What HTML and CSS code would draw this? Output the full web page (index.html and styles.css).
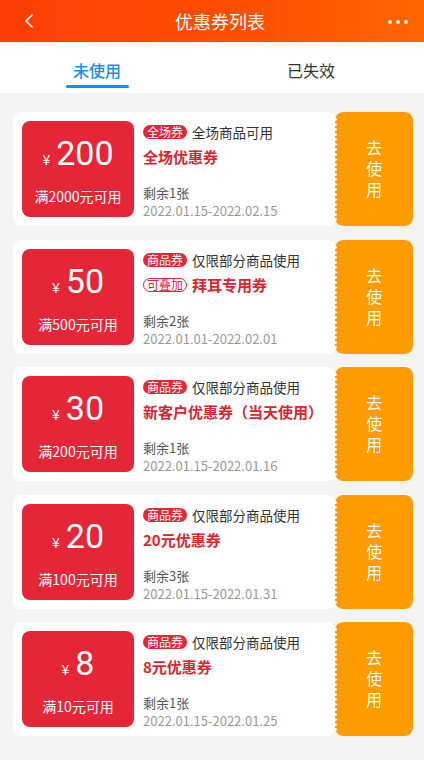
FILE: index.html
```html
<!DOCTYPE html>
<html lang="zh-CN">
<head>
    <meta charset="UTF-8">
    <meta name="viewport" content="width=device-width, initial-scale=1.0">
    <title>优惠券列表</title>
    <link rel="stylesheet" href="styles.css">
</head>
<body>
    <header class="top-bar">
        <svg class="back" width="10" height="14" viewBox="0 0 10 14">
            <polyline points="8,1 2,7 8,13" fill="none" stroke="#fff" stroke-width="1.6" stroke-linecap="round" stroke-linejoin="round"/>
        </svg>
        <div class="title">优惠券列表</div>
        <div class="more"><span></span><span></span><span></span></div>
    </header>

    <!-- Tabs -->
    <div class="tabs">
        <div class="tab active">未使用</div>
        <div class="tab">已失效</div>
    </div>

    <div class="coupon-list">
        <div class="coupon">
            <div class="coupon-body">
                <div class="amount">
                    <div class="value"><span class="yen">¥</span>200</div>
                    <div class="limit">满2000元可用</div>
                </div>
                <div class="info">
                    <div class="scope"><span class="tag">全场券</span>全场商品可用</div>
                    <div class="name">全场优惠券</div>
                    <div class="left">剩余1张</div>
                    <div class="date">2022.01.15-2022.02.15</div>
                </div>
            </div>
            <div class="use-btn"><span>去使用</span></div>
        </div>

        <div class="coupon">
            <div class="coupon-body">
                <div class="amount">
                    <div class="value"><span class="yen">¥</span>50</div>
                    <div class="limit">满500元可用</div>
                </div>
                <div class="info">
                    <div class="scope"><span class="tag">商品券</span>仅限部分商品使用</div>
                    <div class="name"><span class="tag tag-outline">可叠加</span>拜耳专用券</div>
                    <div class="left">剩余2张</div>
                    <div class="date">2022.01.01-2022.02.01</div>
                </div>
            </div>
            <div class="use-btn"><span>去使用</span></div>
        </div>

        <div class="coupon">
            <div class="coupon-body">
                <div class="amount">
                    <div class="value"><span class="yen">¥</span>30</div>
                    <div class="limit">满200元可用</div>
                </div>
                <div class="info">
                    <div class="scope"><span class="tag">商品券</span>仅限部分商品使用</div>
                    <div class="name">新客户优惠券（当天使用）</div>
                    <div class="left">剩余1张</div>
                    <div class="date">2022.01.15-2022.01.16</div>
                </div>
            </div>
            <div class="use-btn"><span>去使用</span></div>
        </div>

        <div class="coupon">
            <div class="coupon-body">
                <div class="amount">
                    <div class="value"><span class="yen">¥</span>20</div>
                    <div class="limit">满100元可用</div>
                </div>
                <div class="info">
                    <div class="scope"><span class="tag">商品券</span>仅限部分商品使用</div>
                    <div class="name">20元优惠券</div>
                    <div class="left">剩余3张</div>
                    <div class="date">2022.01.15-2022.01.31</div>
                </div>
            </div>
            <div class="use-btn"><span>去使用</span></div>
        </div>

        <div class="coupon">
            <div class="coupon-body">
                <div class="amount">
                    <div class="value"><span class="yen">¥</span>8</div>
                    <div class="limit">满10元可用</div>
                </div>
                <div class="info">
                    <div class="scope"><span class="tag">商品券</span>仅限部分商品使用</div>
                    <div class="name">8元优惠券</div>
                    <div class="left">剩余1张</div>
                    <div class="date">2022.01.15-2022.01.25</div>
                </div>
            </div>
            <div class="use-btn"><span>去使用</span></div>
        </div>
    </div>
</body>
</html>
```

FILE: styles.css
```css
body, html {
    font-family: "Noto Sans CJK SC", "Noto Sans", sans-serif;
    background-color: #f4f4f4;
    margin: 0;
    padding: 0;
}
.top-bar {
    height: 42px;
    background: linear-gradient(90deg, #fc3d07 0%, #fe5000 60%, #ff6500 100%);
    display: flex;
    align-items: center;
    justify-content: space-between;
    padding: 0 16px 0 24px;
    color: #fff;
}
.top-bar .back {
    display: block;
    width: 10px;
    height: 14px;
}
.top-bar .title {
    font-size: 18px;
    margin-left: 18px;
}
.top-bar .more {
    display: flex;
    gap: 4px;
    padding-top: 2px;
}
.top-bar .more span {
    width: 4px;
    height: 4px;
    border-radius: 50%;
    background-color: #fff;
}
.tabs {
    height: 51px;
    background-color: #fff;
    display: flex;
    padding-left: 37px;
    gap: 94px;
}
.tab {
    width: 120px;
    text-align: center;
    font-size: 16px;
    color: #333;
    line-height: 56px;
    position: relative;
}
.tab.active {
    color: #1a8de6;
    font-weight: 500;
}
.tab.active::after {
    content: "";
    position: absolute;
    left: 29px;
    right: 28px;
    top: 43px;
    height: 3px;
    border-radius: 2px;
    background-color: #1a8de6;
}
.coupon-list {
    padding: 19px 11px 0 13px;
}
.coupon {
    display: flex;
    height: 114px;
    margin-bottom: 13.5px;
}
.coupon-body {
    flex: 1;
    background-color: #fff;
    border-radius: 8px;
    padding: 9px;
    display: flex;
}
.amount {
    width: 112px;
    height: 96px;
    background-color: #e52637;
    border-radius: 8px;
    color: #fff;
    display: flex;
    flex-direction: column;
    align-items: center;
    padding-top: 12px;
    box-sizing: border-box;
}
.amount .value {
    font-family: Roboto, "Liberation Sans", sans-serif;
    font-size: 34px;
    line-height: 40px;
}
.amount .yen {
    font-family: "Noto Sans CJK SC", sans-serif;
    font-size: 14px;
    margin-right: 6px;
}
.amount .limit {
    font-size: 14px;
    line-height: 20px;
    margin-top: 7px;
}
.info {
    margin-left: 9px;
    color: #333;
}
.info .scope {
    font-size: 13.5px;
    line-height: 22px;
    display: flex;
    align-items: center;
}
.tag {
    display: inline-block;
    font-size: 12px;
    line-height: 14px;
    height: 14px;
    padding: 0 4px;
    border-radius: 7px;
    background-color: #e52637;
    color: #fff;
    margin-right: 5px;
    font-weight: normal;
}
.tag-outline {
    background-color: transparent;
    border: 1px solid #e52637;
    color: #e52637;
    line-height: 12px;
    height: 12px;
    padding: 0 3px;
}
.info .name {
    font-size: 15px;
    line-height: 28px;
    font-weight: bold;
    color: #dc2430;
    display: flex;
    align-items: center;
}
.info .left {
    font-size: 13px;
    line-height: 18px;
    color: #555;
    margin-top: 13px;
}
.info .date {
    font-size: 13px;
    line-height: 18px;
    color: #999;
}
.use-btn {
    width: 78px;
    background-color: #ff9c00;
    border-radius: 8px;
    color: #fff;
    font-size: 16px;
    display: flex;
    align-items: center;
    justify-content: center;
    -webkit-mask: radial-gradient(circle at 0 50%, transparent 1.5px, #000 2px) 0 0 / 100% 5px;
    mask: radial-gradient(circle at 0 50%, transparent 1.5px, #000 2px) 0 0 / 100% 5px;
}
.use-btn span {
    writing-mode: vertical-rl;
    text-orientation: upright;
    letter-spacing: 5px;
    line-height: 20px;
    margin-bottom: -5px;
}
```
